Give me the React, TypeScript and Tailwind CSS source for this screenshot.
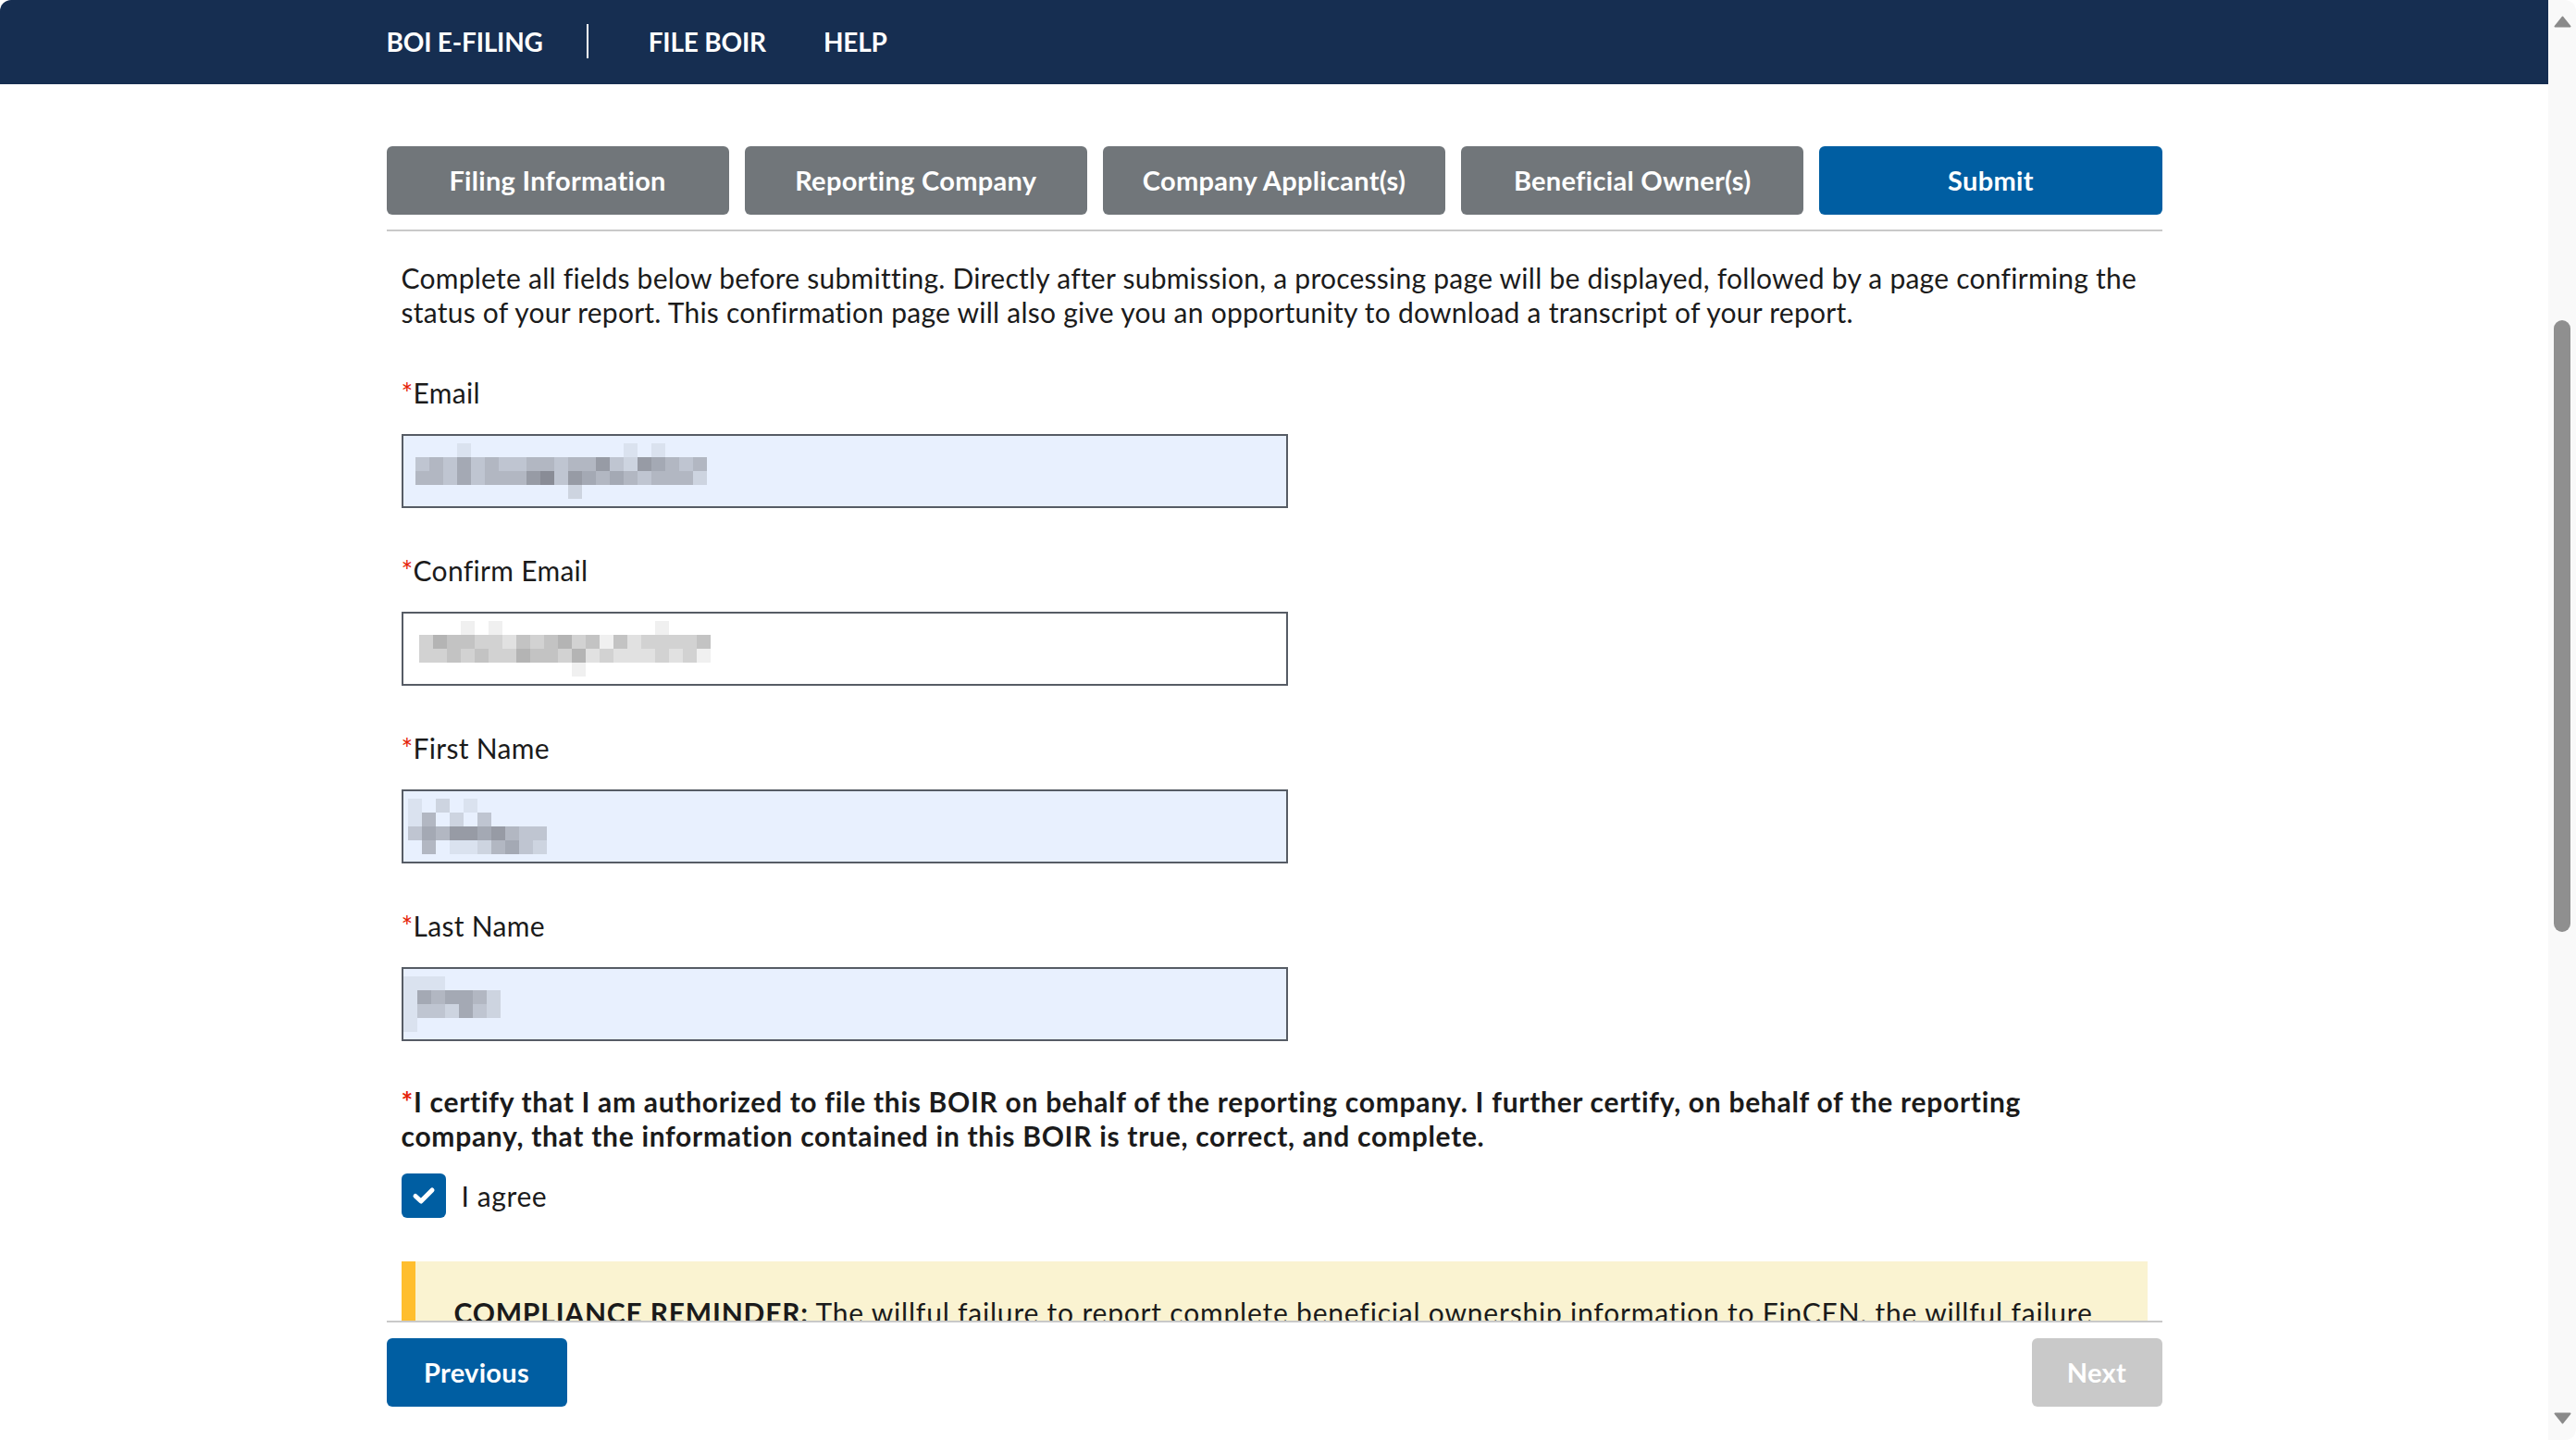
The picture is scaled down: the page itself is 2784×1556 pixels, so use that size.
import React from "react";

type Art = { rows: string[]; ink: [number, number, number]; bg: [number, number, number] };

// Redacted field values are drawn as a coarse mosaic of grey cells.
function Mosaic({ art, cell = 15 }: { art: Art; cell?: number }) {
  const cols = Math.max(...art.rows.map((r) => r.length));
  const rects: React.ReactNode[] = [];
  art.rows.forEach((row, ri) => {
    row.split("").forEach((ch, ci) => {
      if (ch === " ") return;
      const t = Number(ch) / 9;
      const c = art.bg.map((b, i) => Math.round(b + (art.ink[i] - b) * t));
      rects.push(
        <rect key={`${ri}-${ci}`} x={ci * cell} y={ri * cell} width={cell} height={cell} fill={`rgb(${c[0]},${c[1]},${c[2]})`} />
      );
    });
  });
  return (
    <svg width={cols * cell} height={art.rows.length * cell} shapeRendering="crispEdges">
      {rects}
    </svg>
  );
}

const AUTOFILL: [number, number, number] = [232, 240, 254];
const WHITE: [number, number, number] = [255, 255, 255];

const emailArt: Art = {
  ink: [110, 112, 120],
  bg: AUTOFILL,
  rows: [
    "   1           1 1    ",
    "343534334434463265434",
    "443534446736545434442",
    "           2          ",
  ],
};

const confirmArt: Art = {
  ink: [120, 120, 120],
  bg: WHITE,
  rows: [
    "   1 1           1    ",
    "354433243453414233334",
    "334343354435232223231",
    "           1          ",
  ],
};

const firstArt: Art = {
  ink: [110, 112, 120],
  bg: AUTOFILL,
  rows: [
    "1 2 1     ",
    "14 2 3    ",
    "3546656433",
    " 4 1124532",
  ],
};

const lastArt: Art = {
  ink: [110, 112, 120],
  bg: AUTOFILL,
  rows: [
    "111    ",
    "1545542",
    "1332532",
    "1      ",
  ],
};

function Field({ label, art, filled, pad }: { label: string; art: Art; filled: boolean; pad: string }) {
  return (
    <div className="flex flex-col">
      <div className="text-[30px] leading-[37px] tracking-[0.3px]">
        <span className="text-[#e52207]">*</span>
        {label}
      </div>
      <div
        className={`mt-[26px] w-[958px] h-[80px] border-2 border-[#565c65] flex items-center ${pad} ${
          filled ? "bg-[#e8f0fe]" : "bg-white"
        }`}
      >
        <Mosaic art={art} />
      </div>
    </div>
  );
}

function Arrow({ down }: { down?: boolean }) {
  return (
    <svg width="19" height="13" viewBox="0 0 19 13" className={down ? "rotate-180" : ""}>
      <path d="M9.5 1.5 L17.5 11.5 H1.5 Z" fill="#8a8a8a" stroke="#8a8a8a" strokeWidth="2" strokeLinejoin="round" />
    </svg>
  );
}

const tabs = ["Filing Information", "Reporting Company", "Company Applicant(s)", "Beneficial Owner(s)", "Submit"];

export default function App() {
  return (
    <div className="h-screen w-full flex overflow-hidden bg-white text-[#1b1b1b] font-['Lato','Liberation_Sans',sans-serif]">
      <div className="flex-1 min-w-0 flex flex-col">
        {/* top navigation */}
        <header className="h-[91px] shrink-0 bg-[#162e51] rounded-tl-[12px]">
          <nav className="w-[1919px] mx-auto h-full flex items-center pb-[2px] text-white font-bold text-[28px] tracking-[-0.2px]">
            <span>BOI E-FILING</span>
            <span className="ml-[47px] w-[2px] h-[37px] bg-white" />
            <span className="ml-[65px]">FILE BOIR</span>
            <span className="ml-[62px]">HELP</span>
          </nav>
        </header>

        {/* scrolling form area */}
        <main className="flex-1 min-h-0 overflow-hidden">
          <div className="w-[1919px] mx-auto pt-[67px]">
            <div className="flex gap-[17px]">
              {tabs.map((t) => (
                <div
                  key={t}
                  className={`flex-1 h-[74px] rounded-[6px] flex items-center justify-center text-white font-bold text-[29px] tracking-[0.3px] ${
                    t === "Submit" ? "bg-[#005ea2]" : "bg-[#71767a]"
                  }`}
                >
                  {t}
                </div>
              ))}
            </div>
            <div className="mt-[16px] h-[2px] bg-[#c9c9c9]" />

            <div className="px-[16px] pt-[32px]">
              <p className="text-[30px] leading-[37px] tracking-[0.25px] whitespace-nowrap">
                Complete all fields below before submitting. Directly after submission, a processing page will be displayed, followed by a page confirming the
                <br />
                status of your report. This confirmation page will also give you an opportunity to download a transcript of your report.
              </p>

              <div className="mt-[50px] flex flex-col gap-[49px]">
                <Field label="Email" art={emailArt} filled pad="pl-[13px]" />
                <Field label="Confirm Email" art={confirmArt} filled={false} pad="pl-[17px]" />
                <Field label="First Name" art={firstArt} filled pad="pl-[5px]" />
                <Field label="Last Name" art={lastArt} filled pad="pl-0" />
              </div>

              <p className="mt-[47px] text-[30px] leading-[37px] font-bold tracking-[0.7px] whitespace-nowrap">
                <span className="text-[#e52207]">*</span>I certify that I am authorized to file this BOIR on behalf of the reporting company. I further certify, on behalf of the reporting
                <br />
                company, that the information contained in this BOIR is true, correct, and complete.
              </p>

              <label className="mt-[22px] flex items-center gap-[17px] text-[30px] leading-[37px] tracking-[0.6px]">
                <span className="w-[48px] h-[48px] rounded-[6px] bg-[#005ea2] flex items-center justify-center">
                  <svg width="26" height="22" viewBox="0 0 26 22">
                    <path d="M4 11.5 L10 17 L22 5" fill="none" stroke="white" strokeWidth="5" strokeLinecap="round" strokeLinejoin="round" />
                  </svg>
                </span>
                I agree
              </label>

              <div className="mt-[47px] border-l-[15px] border-[#ffbe2e] bg-[#faf3d1] pl-[42px] pr-[40px] pt-[37px] pb-[36px] text-[30px] leading-[37px] tracking-[0.8px] whitespace-nowrap">
                <span className="font-bold">COMPLIANCE REMINDER:</span> The willful failure to report complete beneficial ownership information to FinCEN, the willful failure
                <br />
                to report updated beneficial ownership information to FinCEN, or the willful provision of or attempt to provide false or fraudulent
                <br />
                beneficial ownership information may result in civil or criminal penalties, including civil penalties of up to $500 for each day
                <br />
                that the violation continues, or criminal penalties including imprisonment for up to two years and/or a fine of up to $10,000.
              </div>
            </div>
          </div>
        </main>

        {/* step navigation */}
        <footer className="h-[129px] shrink-0">
          <div className="w-[1919px] mx-auto border-t-2 border-[#c9c9c9] pt-[17px] flex justify-between">
            <button className="h-[74px] w-[195px] rounded-[6px] bg-[#005ea2] text-white font-bold text-[29px] tracking-[0.3px]">Previous</button>
            <button className="h-[74px] w-[141px] rounded-[6px] bg-[#c9c9c9] text-white font-bold text-[29px] tracking-[0.3px]">Next</button>
          </div>
        </footer>
      </div>

      {/* page scrollbar */}
      <div className="w-[30px] shrink-0 bg-[#f9f9f9] rounded-tr-[12px] rounded-br-[12px] flex flex-col items-center pt-[17px] pb-[17px]">
        <Arrow />
        <div className="mt-[316px] w-[18px] h-[661px] rounded-full bg-[#8f8f8f]" />
        <div className="flex-1" />
        <Arrow down />
      </div>
    </div>
  );
}
